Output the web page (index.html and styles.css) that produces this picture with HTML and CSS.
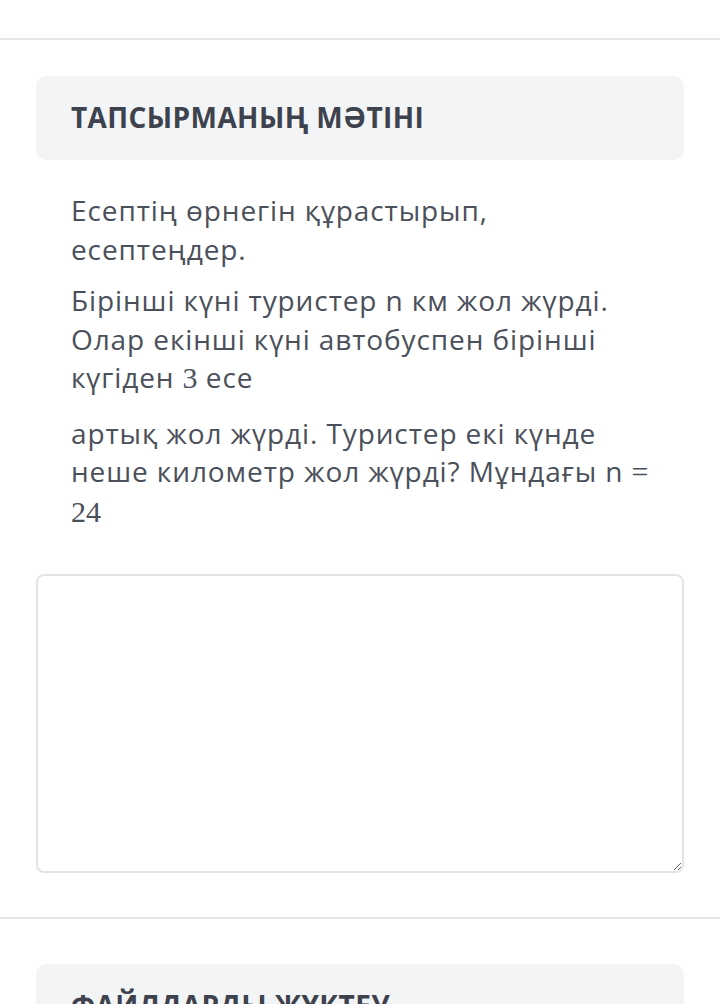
FILE: index.html
```html
<!DOCTYPE html>
<html lang="kk">
<head>
    <meta charset="UTF-8">
    <meta name="viewport" content="width=device-width, initial-scale=1.0">
    <title>Тапсырма</title>
    <link rel="stylesheet" href="styles.css">
</head>
<body>

<div class="topbar"></div>

<section class="block">
    <div class="block-head">
        <h2>ТАПСЫРМАНЫҢ МӘТІНІ</h2>
    </div>

    <div class="task-text">
        <p>Есептің өрнегін құрастырып, есептеңдер.</p>
        <p>Бірінші күні туристер n км жол жүрді. Олар екінші күні автобуспен бірінші күгіден <span class="math">3</span> есе</p>
        <p class="after-math">артық жол жүрді. Туристер екі күнде неше километр жол жүрді? Мұндағы n <span class="math">=</span> <span class="math">24</span></p>
    </div>

    <textarea class="answer"></textarea>
</section>

<section class="block block-next">
    <div class="block-head">
        <h2>ФАЙЛДАРДЫ ЖҮКТЕУ</h2>
    </div>
</section>

</body>
</html>
```

FILE: styles.css
```css
body {
    margin: 0;
    font-family: "Open Sans", Arial, sans-serif;
    background-color: #fff;
    color: #4b505a;
}
.topbar {
    height: 38px;
}
.block {
    border-top: 2px solid #e6e6e6;
    padding: 36px 36px 44px;
}
.block-next {
    padding-top: 45px;
}
.block-head {
    background-color: #f3f4f6;
    border-radius: 10px;
    padding: 23px 35px 25px;
}
.block-head h2 {
    margin: 0;
    font-size: 28px;
    line-height: 36px;
    font-weight: 700;
    color: #3d424c;
    letter-spacing: 0.4px;
}
.task-text {
    padding: 31px 35px 0;
    font-size: 28px;
    line-height: 38.5px;
    letter-spacing: 0.9px;
}
.task-text p {
    margin: 0 0 13px;
}
.task-text p.after-math {
    margin: 16px 0 0;
}
.math {
    font-family: "Liberation Serif", "DejaVu Serif", serif;
    font-size: 30px;
    letter-spacing: 0;
}
.answer {
    display: block;
    box-sizing: border-box;
    width: 100%;
    height: 299px;
    margin-top: 43px;
    border: 2px solid #e4e4e4;
    border-radius: 8px;
    background: #fff;
    resize: vertical;
    font-family: "Open Sans", Arial, sans-serif;
}
```
